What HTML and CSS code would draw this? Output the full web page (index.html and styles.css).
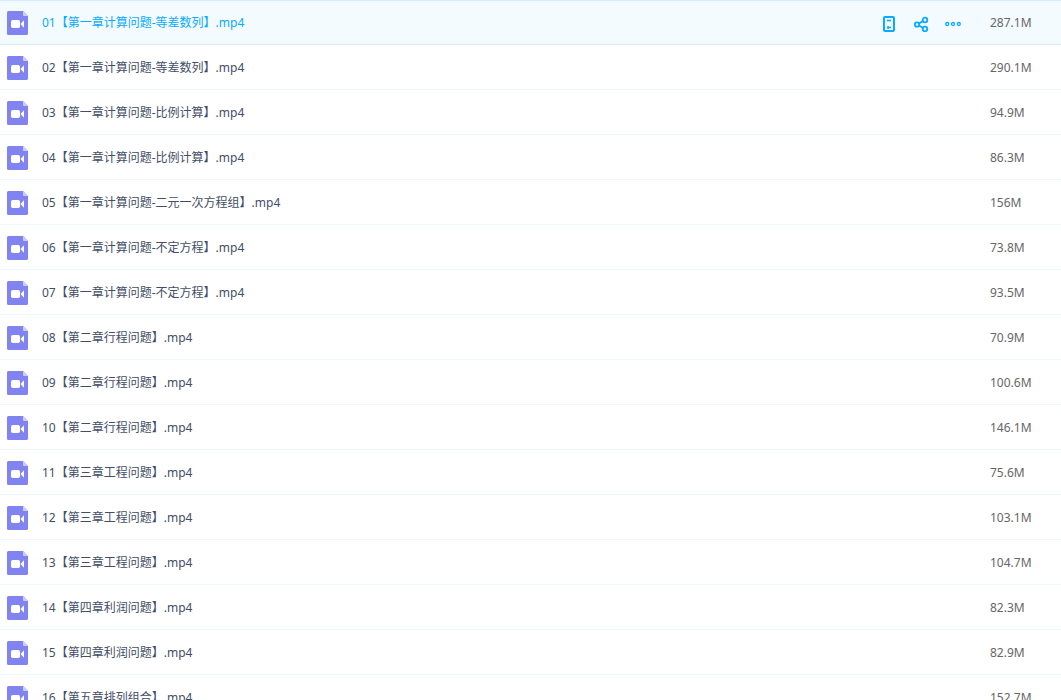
FILE: index.html
```html
<!DOCTYPE html>
<html lang="zh-CN">
<head>
<meta charset="utf-8">
<title>文件列表</title>
<link rel="stylesheet" href="styles.css">
</head>
<body>
<svg class="sprite" aria-hidden="true">
  <symbol id="video" viewBox="0 0 21 24">
    <path fill="#8183f1" d="M1.5 0H16l5 5v17.5a1.5 1.5 0 0 1-1.500 1.500h-18A1.500 1.500 0 0 1 0 22.500v-21A1.500 1.500 0 0 1 1.500 0z"/>
    <path fill="#cdcdfa" d="M16 0l5 5h-4a1 1 0 0 1-1-1z"/>
    <rect x="4" y="9" width="9" height="8" rx="1.800" fill="#fff"/>
    <path fill="#fff" d="M13.500 13L17 9.300v7.400z"/>
  </symbol>
</svg>
<main class="files">
  <table class="file-table">
    <tbody id="rows"></tbody>
  </table>
</main>
<template id="tools">
  <div class="tools">
    <button type="button" class="tool" aria-label="保存到手机">
      <svg viewBox="0 0 16 16" fill="none" stroke="currentColor" stroke-width="2"><rect x="3" y="1" width="10" height="14" rx="1"/><path d="M6 4.500h4" stroke-width="1.600"/><path d="M7 10v3M7 11.500h3" stroke-width="1.600"/></svg>
    </button>
    <button type="button" class="tool" aria-label="分享">
      <svg viewBox="0 0 16 16" fill="none" stroke="currentColor" stroke-width="1.800"><circle cx="4" cy="8.500" r="2.200"/><circle cx="12" cy="4" r="2.300"/><circle cx="12" cy="13" r="2.300"/><path d="M6 7.500L10 5M6 9.500l4 2.500"/></svg>
    </button>
    <button type="button" class="tool" aria-label="更多">
      <svg viewBox="0 0 16 16" fill="none" stroke="currentColor" stroke-width="1.300"><circle cx="2.200" cy="8" r="1.500"/><circle cx="8" cy="8" r="1.500"/><circle cx="13.800" cy="8" r="1.500"/></svg>
    </button>
  </div>
</template>
<script src="files.js"></script>
</body>
</html>
```
FILE: styles.css
```css
body {
  margin: 0;
  background: #fff;
  color: #424e67;
  font-family: "Noto Sans", "Noto Sans CJK SC", sans-serif;
  font-size: 12px;
  line-height: 18px;
}

.sprite {
  position: absolute;
  width: 0;
  height: 0;
}

.files {
  height: 100vh;
  overflow: hidden;
}

.file-table {
  width: 100%;
  border-collapse: separate;
  border-spacing: 0;
  table-layout: fixed;
}

.file-table td {
  box-sizing: border-box;
  height: 45px;
  padding: 0;
  border-top: 1px solid transparent;
  border-bottom: 1px solid #f2f6fd;
  vertical-align: middle;
}

.file-table .active td {
  background: #f3fbff;
  border-color: #d6e9ff;
}

.name-cell {
  width: auto;
}

.name {
  display: flex;
  align-items: center;
  gap: 14px;
  padding-left: 7px;
}

.file-icon {
  flex: none;
  width: 21px;
  height: 24px;
}

.name-link {
  color: inherit;
  text-decoration: none;
  white-space: nowrap;
}

.active .name-link,
.name-link:hover {
  color: #09aaff;
}

.file-table .tools-cell {
  width: 109px;
}

.tools {
  display: flex;
  gap: 16px;
  padding-top: 2px;
}

.tool {
  width: 16px;
  height: 16px;
  padding: 0;
  border: 0;
  background: none;
  color: #09aaff;
  cursor: pointer;
}

.tool svg {
  display: block;
  width: 16px;
  height: 16px;
}

.file-table .size-cell {
  width: 71px;
  color: #666;
}
```
FILE: files.js
```js
const files = [
  ["01【第一章计算问题-等差数列】.mp4", "287.1M"],
  ["02【第一章计算问题-等差数列】.mp4", "290.1M"],
  ["03【第一章计算问题-比例计算】.mp4", "94.9M"],
  ["04【第一章计算问题-比例计算】.mp4", "86.3M"],
  ["05【第一章计算问题-二元一次方程组】.mp4", "156M"],
  ["06【第一章计算问题-不定方程】.mp4", "73.8M"],
  ["07【第一章计算问题-不定方程】.mp4", "93.5M"],
  ["08【第二章行程问题】.mp4", "70.9M"],
  ["09【第二章行程问题】.mp4", "100.6M"],
  ["10【第二章行程问题】.mp4", "146.1M"],
  ["11【第三章工程问题】.mp4", "75.6M"],
  ["12【第三章工程问题】.mp4", "103.1M"],
  ["13【第三章工程问题】.mp4", "104.7M"],
  ["14【第四章利润问题】.mp4", "82.3M"],
  ["15【第四章利润问题】.mp4", "82.9M"],
  ["16【第五章排列组合】.mp4", "152.7M"]
];

const body = document.getElementById("rows");
files.forEach(([name, size], i) => {
  const row = document.createElement("tr");
  row.innerHTML = `<td class="name-cell"><div class="name"><svg class="file-icon" aria-hidden="true"><use href="#video"/></svg><a class="name-link" href="#">${name}</a></div></td><td class="tools-cell"></td><td class="size-cell">${size}</td>`;
  if (i === 0) {
    row.className = "active";
    row.querySelector(".tools-cell").append(document.getElementById("tools").content.cloneNode(true));
  }
  body.append(row);
});
```
